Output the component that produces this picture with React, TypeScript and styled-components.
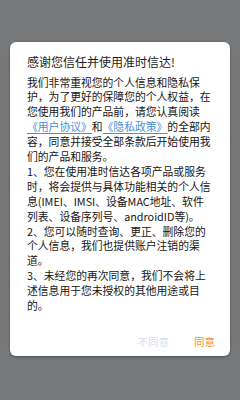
import styled, { createGlobalStyle } from "styled-components";

const GlobalStyle = createGlobalStyle`
  html, body {
    margin: 0;
    padding: 0;
    background: #77787a;
  }

  body {
    font-family: "Noto Sans CJK SC", "Noto Sans", sans-serif;
  }
`;

type Line = string | { text: string; link?: boolean }[];

const paragraphs: Line[][] = [
  [
    "我们非常重视您的个人信息和隐私保",
    "护，为了更好的保障您的个人权益，在",
    "您使用我们的产品前，请您认真阅读",
    [
      { text: "《用户协议》", link: true },
      { text: "和" },
      { text: "《隐私政策》", link: true },
      { text: "的全部内" },
    ],
    "容，同意并接受全部条款后开始使用我",
    "们的产品和服务。",
  ],
  [
    "1、您在使用准时信达各项产品或服务",
    "时，将会提供与具体功能相关的个人信",
    "息(IMEI、IMSI、设备MAC地址、软件",
    "列表、设备序列号、androidID等)。",
  ],
  [
    "2、您可以随时查询、更正、删除您的",
    "个人信息，我们也提供账户注销的渠",
    "道。",
  ],
  [
    "3、未经您的再次同意，我们不会将上",
    "述信息用于您未授权的其他用途或目",
    "的。",
  ],
];

export default function App() {
  return (
    <>
      <GlobalStyle />
      <Overlay>
        <Dialog>
          <Title>感谢您信任并使用准时信达!</Title>
          <Body>
            {paragraphs.map((lines, i) => (
              <Para key={i}>
                {lines.map((line, j) => (
                  <TextLine key={j}>
                    {typeof line === "string"
                      ? line
                      : line.map((part, k) =>
                          part.link ? (
                            <Link key={k}>{part.text}</Link>
                          ) : (
                            <span key={k}>{part.text}</span>
                          )
                        )}
                  </TextLine>
                ))}
              </Para>
            ))}
          </Body>
          <Actions>
            <ActionButton $tone="muted">不同意</ActionButton>
            <ActionButton $tone="primary">同意</ActionButton>
          </Actions>
        </Dialog>
      </Overlay>
    </>
  );
}

const Overlay = styled.div`
  width: 240px;
  height: 400px;
  box-sizing: border-box;
  padding: 42px 10px 0;
  background: #77787a;
`;

const Dialog = styled.div`
  display: flex;
  flex-direction: column;
  height: 314px;
  box-sizing: border-box;
  padding: 12px 15px 7px 17px;
  background: #ffffff;
  border-radius: 6px;
  box-shadow: 0 1px 3px rgba(0, 0, 0, 0.35);
`;

const Title = styled.h1`
  margin: 0;
  font-size: 12px;
  line-height: 16px;
  font-weight: 400;
  color: #1c1c1c;
  white-space: nowrap;
`;

const Body = styled.div`
  margin-top: 4.5px;
  font-size: 10.8px;
  line-height: 14.9px;
  color: #161616;
`;

const Para = styled.p`
  margin: 0;
`;

const TextLine = styled.span`
  display: block;
  white-space: nowrap;
`;

const Link = styled.span`
  color: #4a8fd9;
  text-decoration: underline;
  text-underline-offset: 2px;
`;

const Actions = styled.div`
  display: flex;
  justify-content: flex-end;
  gap: 25px;
  margin-top: auto;
`;

const ActionButton = styled.button<{ $tone: "muted" | "primary" }>`
  padding: 0;
  border: none;
  background: none;
  font-family: inherit;
  font-size: 10.5px;
  line-height: 14px;
  color: ${(p) => (p.$tone === "primary" ? "#f0902e" : "#d3e0ef")};
`;
